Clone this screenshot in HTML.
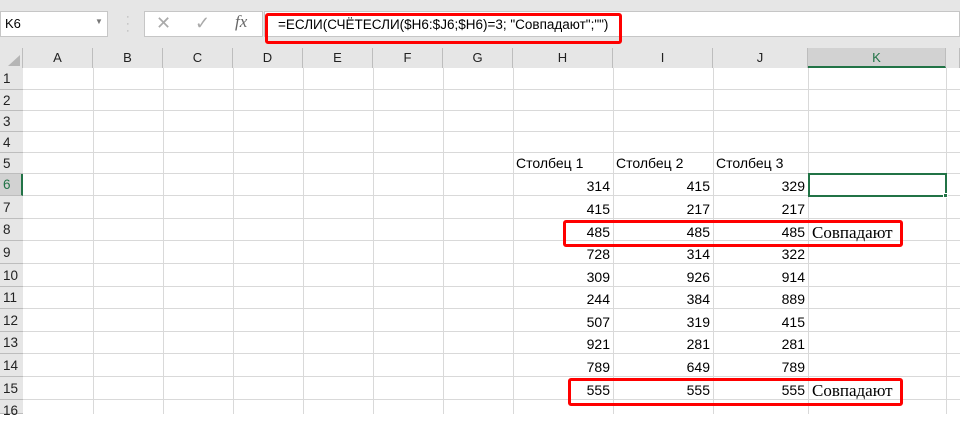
<!DOCTYPE html><html><head><meta charset="utf-8"><style>
*{margin:0;padding:0;box-sizing:border-box}
body{width:960px;height:414px;overflow:hidden;background:#fff;position:relative;font-family:"Liberation Sans",sans-serif;font-size:14px;color:#000}
.a{position:absolute}
.vl{position:absolute;width:1px;background:#d9d9d9}
.hl{position:absolute;height:1px;background:#d9d9d9}
.ch{position:absolute;top:48px;height:20px;text-align:center;line-height:20px;font-size:13px;color:#222;border-right:1px solid #bdbdbd;background:#e6e6e6}
.rh{position:absolute;left:0;width:23px;padding-left:3px;font-size:13.5px;color:#222;background:#e6e6e6;border-bottom:1px solid #bdbdbd}
.n{position:absolute;text-align:right;font-size:14px}
.red{position:absolute;border:3px solid #f00;border-radius:3px}
</style></head><body>
<div class="a" style="left:0;top:0;width:960px;height:48px;background:#e6e6e6"></div>
<div class="a" style="left:0;top:11px;width:108px;height:26px;background:#fff;border:1px solid #c6c6c6"></div>
<div class="a" style="left:5px;top:16px;font-size:13px">K6</div>
<div class="a" style="left:95px;top:17px;font-size:8px;color:#777">▼</div>
<div class="a" style="left:126px;top:14px;color:#aaa;font-size:11px;line-height:7px">·<br>·<br>·</div>
<div class="a" style="left:144px;top:11px;width:119px;height:26px;background:#fff;border:1px solid #c6c6c6"></div>
<div class="a" style="left:156px;top:13px;color:#aaa;font-size:18px">✕</div>
<div class="a" style="left:195px;top:13px;color:#aaa;font-size:18px">✓</div>
<div class="a" style="left:235px;top:12px;color:#666;font-size:17px;font-family:'Liberation Serif',serif;font-style:italic">fx</div>
<div class="a" style="left:264px;top:11px;width:696px;height:26px;background:#fff;border:1px solid #c6c6c6"></div>
<div class="a" style="left:278px;top:17px;font-size:13.5px;white-space:nowrap">=ЕСЛИ(СЧЁТЕСЛИ($H6:$J6;$H6)=3; "Совпадают";"")</div>
<div class="red" style="left:265px;top:13px;width:357px;height:31px"></div>
<div class="a" style="left:0;top:48px;width:23px;height:20px;background:#e6e6e6;border-right:1px solid #bdbdbd"></div>
<div class="a" style="left:8px;top:55px;width:0;height:0;border-left:12px solid transparent;border-bottom:11px solid #b5b5b5"></div>
<div class="ch" style="left:23px;width:70px">A</div><div class="ch" style="left:93px;width:70px">B</div><div class="ch" style="left:163px;width:70px">C</div><div class="ch" style="left:233px;width:70px">D</div><div class="ch" style="left:303px;width:70px">E</div><div class="ch" style="left:373px;width:70px">F</div><div class="ch" style="left:443px;width:70px">G</div><div class="ch" style="left:513px;width:100px">H</div><div class="ch" style="left:613px;width:100px">I</div><div class="ch" style="left:713px;width:95px">J</div><div class="ch" style="left:808px;width:138px;background:#d2d2d2;border-bottom:2px solid #217346;color:#217346">K</div><div class="ch" style="left:946px;width:14px"></div>
<div class="vl" style="left:93px;top:68px;height:346px"></div><div class="vl" style="left:163px;top:68px;height:346px"></div><div class="vl" style="left:233px;top:68px;height:346px"></div><div class="vl" style="left:303px;top:68px;height:346px"></div><div class="vl" style="left:373px;top:68px;height:346px"></div><div class="vl" style="left:443px;top:68px;height:346px"></div><div class="vl" style="left:513px;top:68px;height:346px"></div><div class="vl" style="left:613px;top:68px;height:346px"></div><div class="vl" style="left:713px;top:68px;height:346px"></div><div class="vl" style="left:808px;top:68px;height:346px"></div><div class="vl" style="left:946px;top:68px;height:346px"></div>
<div class="rh" style="top:68px;height:22px;line-height:22px">1</div><div class="hl" style="left:23px;top:89px;width:937px"></div>
<div class="rh" style="top:90px;height:21px;line-height:21px">2</div><div class="hl" style="left:23px;top:110px;width:937px"></div>
<div class="rh" style="top:111px;height:21px;line-height:21px">3</div><div class="hl" style="left:23px;top:131px;width:937px"></div>
<div class="rh" style="top:132px;height:21px;line-height:21px">4</div><div class="hl" style="left:23px;top:152px;width:937px"></div>
<div class="rh" style="top:153px;height:21px;line-height:21px">5</div><div class="hl" style="left:23px;top:173px;width:937px"></div>
<div class="rh" style="top:174px;height:22px;line-height:22px;background:#d2d2d2;color:#217346;border-right:2px solid #217346">6</div><div class="hl" style="left:23px;top:195px;width:937px"></div>
<div class="rh" style="top:196px;height:23px;line-height:23px">7</div><div class="hl" style="left:23px;top:218px;width:937px"></div>
<div class="rh" style="top:219px;height:22px;line-height:22px">8</div><div class="hl" style="left:23px;top:240px;width:937px"></div>
<div class="rh" style="top:241px;height:23px;line-height:23px">9</div><div class="hl" style="left:23px;top:263px;width:937px"></div>
<div class="rh" style="top:264px;height:23px;line-height:23px">10</div><div class="hl" style="left:23px;top:286px;width:937px"></div>
<div class="rh" style="top:287px;height:22px;line-height:22px">11</div><div class="hl" style="left:23px;top:308px;width:937px"></div>
<div class="rh" style="top:309px;height:23px;line-height:23px">12</div><div class="hl" style="left:23px;top:331px;width:937px"></div>
<div class="rh" style="top:332px;height:22px;line-height:22px">13</div><div class="hl" style="left:23px;top:353px;width:937px"></div>
<div class="rh" style="top:354px;height:23px;line-height:23px">14</div><div class="hl" style="left:23px;top:376px;width:937px"></div>
<div class="rh" style="top:377px;height:23px;line-height:23px">15</div><div class="hl" style="left:23px;top:399px;width:937px"></div>
<div class="rh" style="top:400px;height:14px;line-height:22px">16</div>
<div class="a" style="left:516px;top:155px">Столбец 1</div><div class="a" style="left:616px;top:155px">Столбец 2</div><div class="a" style="left:716px;top:155px">Столбец 3</div>
<div class="a" style="left:808px;top:173px;width:139px;height:24px;border:2px solid #217346"></div>
<div class="a" style="left:943px;top:193px;width:5px;height:5px;background:#217346;border:1px solid #fff"></div>
<div style="position:absolute;left:0;top:0">
<div class="n" style="left:513px;top:178px;width:97px">314</div><div class="n" style="left:613px;top:178px;width:97px">415</div><div class="n" style="left:713px;top:178px;width:92px">329</div>
<div class="n" style="left:513px;top:201px;width:97px">415</div><div class="n" style="left:613px;top:201px;width:97px">217</div><div class="n" style="left:713px;top:201px;width:92px">217</div>
<div class="n" style="left:513px;top:224px;width:97px">485</div><div class="n" style="left:613px;top:224px;width:97px">485</div><div class="n" style="left:713px;top:224px;width:92px">485</div>
<div class="n" style="left:513px;top:246px;width:97px">728</div><div class="n" style="left:613px;top:246px;width:97px">314</div><div class="n" style="left:713px;top:246px;width:92px">322</div>
<div class="n" style="left:513px;top:269px;width:97px">309</div><div class="n" style="left:613px;top:269px;width:97px">926</div><div class="n" style="left:713px;top:269px;width:92px">914</div>
<div class="n" style="left:513px;top:291px;width:97px">244</div><div class="n" style="left:613px;top:291px;width:97px">384</div><div class="n" style="left:713px;top:291px;width:92px">889</div>
<div class="n" style="left:513px;top:314px;width:97px">507</div><div class="n" style="left:613px;top:314px;width:97px">319</div><div class="n" style="left:713px;top:314px;width:92px">415</div>
<div class="n" style="left:513px;top:336px;width:97px">921</div><div class="n" style="left:613px;top:336px;width:97px">281</div><div class="n" style="left:713px;top:336px;width:92px">281</div>
<div class="n" style="left:513px;top:359px;width:97px">789</div><div class="n" style="left:613px;top:359px;width:97px">649</div><div class="n" style="left:713px;top:359px;width:92px">789</div>
<div class="n" style="left:513px;top:382px;width:97px">555</div><div class="n" style="left:613px;top:382px;width:97px">555</div><div class="n" style="left:713px;top:382px;width:92px">555</div>
</div>
<div class="a" style="left:812px;top:223px;font-family:'Liberation Serif',serif;font-size:17px">Совпадают</div>
<div class="a" style="left:812px;top:381px;font-family:'Liberation Serif',serif;font-size:17px">Совпадают</div>
<div class="red" style="left:563px;top:220px;width:340px;height:27px"></div>
<div class="red" style="left:568px;top:378px;width:335px;height:28px"></div>
</body></html>
